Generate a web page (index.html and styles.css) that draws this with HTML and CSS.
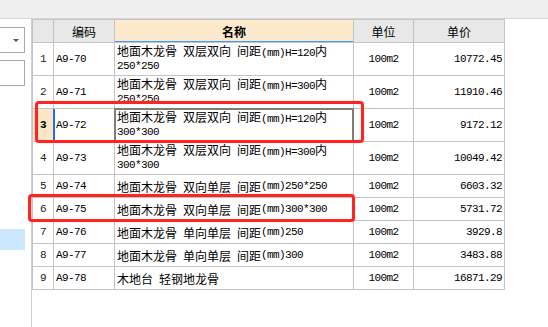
FILE: index.html
```html
<!DOCTYPE html>
<html lang="zh-CN">
<head>
<meta charset="utf-8">
<title>定额列表</title>
<link rel="stylesheet" href="styles.css">
</head>
<body>
<div class="top"></div>
<div class="main">
  <div class="panel">
    <div class="combo"><span class="arrow"></span></div>
    <div class="field"></div>
    <div class="sel"></div>
  </div>
  <div class="content">
    <div class="grid">
      <div class="c h"></div>
      <div class="c h">编码</div>
      <div class="c h hn">名称</div>
      <div class="c h">单位</div>
      <div class="c h">单价</div>

      <div class="c num n">1</div>
      <div class="c code n">A9-70</div>
      <div class="c name two"><div class="ln1">地面木龙骨&ensp;双层双向&ensp;间距<span class="n">(mm)H=120</span>内</div><div class="ln2 n">250*250</div></div>
      <div class="c unit n">100m2</div>
      <div class="c price n">10772.45</div>

      <div class="c num n">2</div>
      <div class="c code n">A9-71</div>
      <div class="c name two"><div class="ln1">地面木龙骨&ensp;双层双向&ensp;间距<span class="n">(mm)H=300</span>内</div><div class="ln2 n">250*250</div></div>
      <div class="c unit n">100m2</div>
      <div class="c price n">11910.46</div>

      <div class="c num n cur">3</div>
      <div class="c code n curcode">A9-72</div>
      <div class="c name two focus"><div class="ln1">地面木龙骨&ensp;双层双向&ensp;间距<span class="n">(mm)H=120</span>内</div><div class="ln2 n">300*300</div></div>
      <div class="c unit n">100m2</div>
      <div class="c price n">9172.12</div>

      <div class="c num n">4</div>
      <div class="c code n">A9-73</div>
      <div class="c name two"><div class="ln1">地面木龙骨&ensp;双层双向&ensp;间距<span class="n">(mm)H=300</span>内</div><div class="ln2 n">300*300</div></div>
      <div class="c unit n">100m2</div>
      <div class="c price n">10049.42</div>

      <div class="c num n">5</div>
      <div class="c code n">A9-74</div>
      <div class="c name">地面木龙骨&ensp;双向单层&ensp;间距<span class="n">(mm)250*250</span></div>
      <div class="c unit n">100m2</div>
      <div class="c price n">6603.32</div>

      <div class="c num n">6</div>
      <div class="c code n">A9-75</div>
      <div class="c name">地面木龙骨&ensp;双向单层&ensp;间距<span class="n">(mm)300*300</span></div>
      <div class="c unit n">100m2</div>
      <div class="c price n">5731.72</div>

      <div class="c num n">7</div>
      <div class="c code n">A9-76</div>
      <div class="c name">地面木龙骨&ensp;单向单层&ensp;间距<span class="n">(mm)250</span></div>
      <div class="c unit n">100m2</div>
      <div class="c price n">3929.8</div>

      <div class="c num n">8</div>
      <div class="c code n">A9-77</div>
      <div class="c name">地面木龙骨&ensp;单向单层&ensp;间距<span class="n">(mm)300</span></div>
      <div class="c unit n">100m2</div>
      <div class="c price n">3483.88</div>

      <div class="c num n">9</div>
      <div class="c code n">A9-78</div>
      <div class="c name">木地台&ensp;轻钢地龙骨</div>
      <div class="c unit n">100m2</div>
      <div class="c price n">16871.29</div>
    </div>
    <div class="mark mark1"></div>
    <div class="mark mark2"></div>
  </div>
</div>
</body>
</html>
```
FILE: styles.css
```css
* { box-sizing: border-box; }
html, body {
  margin: 0;
  padding: 0;
  background: #ffffff;
  width: 548px;
  height: 327px;
  overflow: hidden;
  font-family: "Noto Sans CJK SC", sans-serif;
  font-size: 12px;
  color: #000;
}
.top {
  height: 19px;
  background: #f0f0f0;
  border-bottom: 1px solid #d6d6d6;
}
.main {
  display: flex;
  height: 308px;
}
.panel {
  width: 32px;
  border-right: 1px solid #cfcfcf;
  flex: none;
  display: flex;
  flex-direction: column;
}
.combo, .field {
  width: 31px;
  height: 26px;
  margin-left: -6px;
  border: 1px solid #a8a8a8;
  background: #fff;
}
.combo {
  margin-top: 8px;
  display: flex;
  align-items: center;
  justify-content: flex-end;
  padding-right: 5px;
}
.arrow {
  width: 0;
  height: 0;
  border-left: 3px solid transparent;
  border-right: 3px solid transparent;
  border-top: 3px solid #555;
}
.field { margin-top: 7px; }
.sel {
  margin-top: 143px;
  width: 25px;
  height: 21px;
  background: #cce8ff;
}
.content {
  position: relative;
  flex: 1;
}
.grid {
  display: grid;
  grid-template-columns: 20px 60px 238px 59px 90px;
  grid-template-rows: 22px 32px 32px 32px 32px 22px 22px 22px 22px 22px;
  gap: 1px;
  width: max-content;
  background: #c4c4c4;
  border: 1px solid #c4c4c4;
}
.c {
  background: #fff;
  white-space: nowrap;
  display: flex;
  align-items: center;
  overflow: visible;
}
.n {
  font-family: "Liberation Mono", monospace;
  font-size: 11px;
  letter-spacing: -0.6px;
}
.h {
  background: #e8e8e8;
  justify-content: center;
  font-size: 12px;
}
.hn {
  background: #fde9cc;
  font-weight: bold;
  box-shadow: inset 0 -1px 0 #3d9bff;
}
.num { justify-content: center; color: #222; }
.cur { background: #fde6c6; font-weight: bold; color: #000; }
.code { padding-left: 2px; }
.curcode { box-shadow: -1px 0 0 #1a6ff0, inset 1px 0 0 #1a6ff0; }
.name { padding-left: 2px; }
.two {
  display: block;
}
.ln1 {
  height: 15px;
  line-height: 15px;
}
.ln1 .n { line-height: 15px; }
.ln2 {
  height: 16px;
  line-height: 16px;
}
.unit { justify-content: center; }
.price { justify-content: flex-end; padding-right: 2px; }
.focus {
  box-shadow: 0 0 0 1px #7d7d7d, inset 0 0 0 1px #7d7d7d;
}
.mark {
  position: absolute;
  border: 3px solid #ff2424;
  border-radius: 4px;
  box-shadow: 0 0 1px rgba(255, 40, 40, 0.6);
}
.mark1 {
  left: 3px;
  top: 82px;
  width: 329px;
  height: 42px;
}
.mark2 {
  left: -4px;
  top: 175px;
  width: 327px;
  height: 28px;
}
```
